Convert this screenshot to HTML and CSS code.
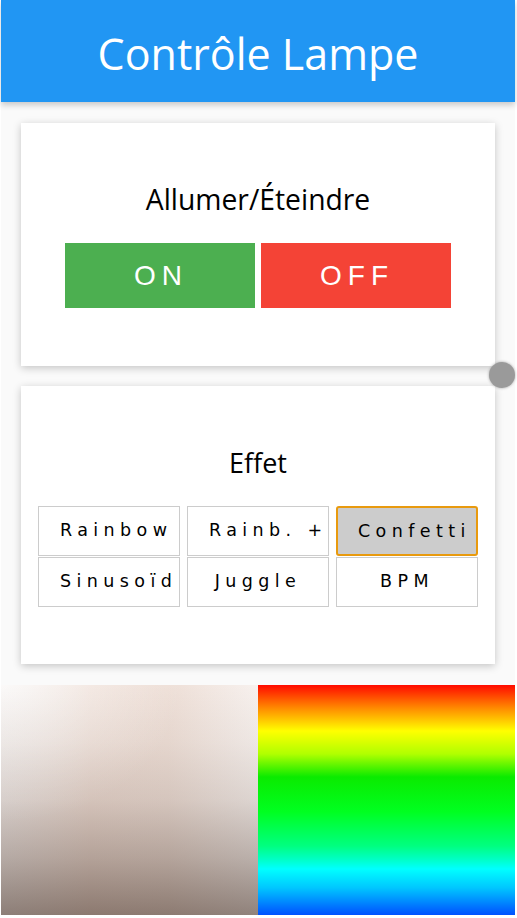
FILE: index.html
```html
<!DOCTYPE html>
<html lang="fr">
<head>
<meta charset="utf-8">
<title>Contrôle Lampe</title>
<link rel="stylesheet" href="styles.css">
</head>
<body>
<div class="page">
  <header class="topbar"><h1 class="title">Contrôle Lampe</h1></header>
  <section class="card card-power">
    <h2 class="card-title">Allumer/Éteindre</h2>
    <div class="power-row">
      <button class="pbtn on">ON</button>
      <button class="pbtn off">OFF</button>
    </div>
  </section>
  <section class="card card-effect">
    <h2 class="card-title">Effet</h2>
    <div class="effects">
      <div class="fx">Rainbow</div>
      <div class="fx">Rainb. +</div>
      <div class="fx active">Confetti</div>
      <div class="fx">Sinusoïd</div>
      <div class="fx">Juggle</div>
      <div class="fx">BPM</div>
    </div>
  </section>
  <div class="pickers">
    <div class="sv"></div>
    <div class="hue"></div>
  </div>
  <div class="knob"></div>
</div>
</body>
</html>
```
FILE: styles.css
```css
html { background: #ffffff; }
body { margin: 0; }
.page {
  position: relative;
  width: 514px;
  margin-left: 1px;
  background: #fafafa;
}
.topbar {
  height: 102px;
  background: #2196f3;
  box-shadow: 0 3px 6px rgba(0,0,0,0.2);
  display: flex;
  align-items: center;
  justify-content: center;
  position: relative;
  z-index: 1;
}
.title {
  margin: 0;
  color: #fff;
  font-family: "Open Sans", sans-serif;
  font-weight: 400;
  font-size: 43px;
  padding-top: 4px;
}
.card {
  background: #fff;
  width: 474px;
  margin-left: 20px;
  box-shadow: 0 2px 8px rgba(0,0,0,0.22);
  display: flex;
  flex-direction: column;
  align-items: center;
}
.card-power { margin-top: 21px; padding: 56px 0 58px; }
.card-effect { margin-top: 20px; padding: 57px 0 57px; }
.card-title {
  margin: 0;
  font-family: "Open Sans", sans-serif;
  font-weight: 400;
  font-size: 28.3px;
  line-height: 40px;
  height: 40px;
  color: #000;
}
.card-effect .card-title { font-size: 27px; }
.power-row {
  display: flex;
  gap: 6px;
  margin-top: 24px;
}
.pbtn {
  width: 190px;
  height: 65px;
  border: 0;
  color: #fff;
  font-family: "Liberation Sans", sans-serif;
  font-size: 28px;
  letter-spacing: 6px;
  padding: 0 0 0 2px;
}
.on { background: #4caf50; }
.off { background: #f44336; }
.effects {
  margin-top: 23px;
  display: grid;
  grid-template-columns: repeat(3, 142px);
  column-gap: 7px;
  row-gap: 1px;
}
.fx {
  box-sizing: border-box;
  height: 50px;
  border: 1.5px solid #cccccc;
  padding: 0 21px;
  line-height: 47px;
  text-align: center;
  white-space: nowrap;
  font-family: "DejaVu Sans", sans-serif;
  font-size: 17.5px;
  letter-spacing: 5.4px;
  color: #000;
}
.active {
  background: #cccccc;
  border: 2px solid #e89a0e;
  border-radius: 3px;
  padding: 0 20px;
  line-height: 46px;
}
.pickers {
  margin-top: 21px;
  display: grid;
  grid-template-columns: 257px 257px;
  height: 230px;
  margin-bottom: 3px;
}
.sv {
  background:
    linear-gradient(to bottom, rgba(60,40,30,0) 0%, rgba(60,40,30,0.05) 25%, rgba(60,40,30,0.14) 50%, rgba(60,40,30,0.32) 75%, rgba(60,40,30,0.55) 100%),
    radial-gradient(ellipse 70% 60% at 0% 0%, rgba(255,255,255,0.75), rgba(255,255,255,0) 100%),
    linear-gradient(to right, #efe8e5 0%, #eddcd3 35%, #eedfd7 65%, #f7f1ee 100%);
}
.hue {
  background: linear-gradient(to bottom,
    #ff0a00 0%, #ff8a00 10%, #ffff00 20%, #b0ff00 30%, #0aeb00 40%,
    #00ff20 55%, #00ff80 70%, #00ffc8 76%, #00ffff 80%, #00c8ff 88%, #0050ff 100%);
}
.knob {
  position: absolute;
  left: 488px;
  top: 362px;
  width: 26px;
  height: 26px;
  border-radius: 50%;
  background: #9a9a9a;
  box-shadow: 0 0 3px rgba(0,0,0,0.35);
}
```
